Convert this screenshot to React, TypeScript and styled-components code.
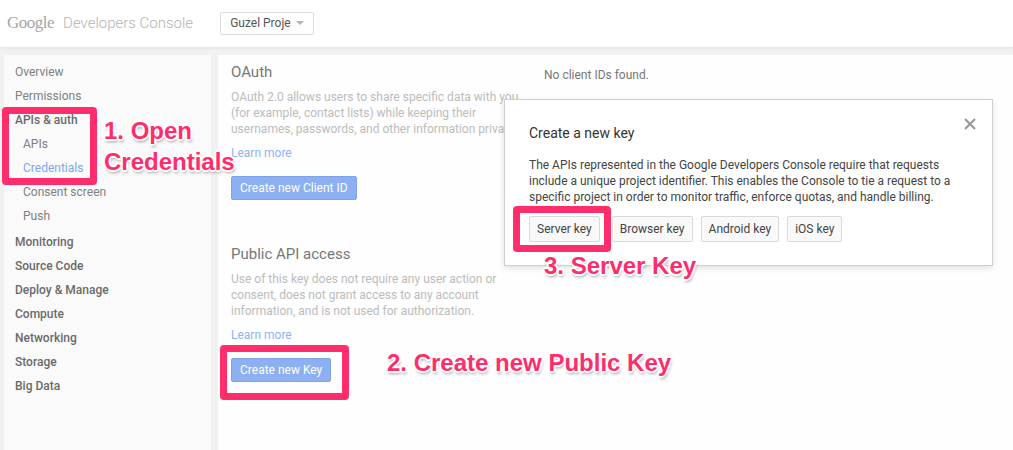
import React from "react";
import styled, { createGlobalStyle } from "styled-components";

const GlobalStyle = createGlobalStyle`
  html, body { margin: 0; padding: 0; }
  body {
    background: #f1f1f1;
    font-family: Roboto, "Noto Sans", Arial, sans-serif;
    -webkit-font-smoothing: antialiased;
  }
`;

const PINK = "#ff2d6c";

const Page = styled.div`
  position: relative;
  width: 1013px;
  height: 450px;
  overflow: hidden;
  background: #f1f1f1;
`;

const Header = styled.header`
  display: flex;
  align-items: center;
  height: 46px;
  padding: 0 0 1px 7px;
  background: #ffffff;
  box-shadow: 0 1px 3px rgba(0, 0, 0, 0.08);
  position: relative;
  z-index: 1;
`;

const GoogleLogo = styled.span`
  font-family: "Liberation Serif", "DejaVu Serif", serif;
  font-size: 17px;
  color: #a6a6a6;
  letter-spacing: -0.5px;
`;

const ProductName = styled.span`
  margin-left: 9px;
  font-size: 15px;
  font-weight: 300;
  color: #b3b3b3;
`;

const ProjectSelect = styled.div`
  margin-left: 27px;
  display: flex;
  align-items: center;
  justify-content: space-between;
  width: 94px;
  height: 23px;
  box-sizing: border-box;
  padding: 0 9px 0 9px;
  border: 1px solid #dcdcdc;
  border-radius: 2px;
  background: #fff;
  font-size: 12px;
  color: #555;
`;

const Caret = styled.span`
  width: 0;
  height: 0;
  border-left: 4px solid transparent;
  border-right: 4px solid transparent;
  border-top: 4px solid #b5b5b5;
`;

const Body = styled.div`
  display: flex;
  gap: 7px;
  padding: 8px 0 0 4px;
  height: 396px;
`;

const Sidebar = styled.nav`
  width: 207px;
  flex: none;
  background: #fafafa;
  padding-top: 5px;
  box-sizing: border-box;
`;

const NavItem = styled.div<{ $level: number; $strong?: boolean; $active?: boolean; $gapAfter?: boolean }>`
  height: 24px;
  line-height: 24px;
  font-size: 12px;
  padding-left: ${(p) => (p.$level === 1 ? 19 : 11)}px;
  font-weight: ${(p) => (p.$strong ? 500 : 400)};
  color: ${(p) => (p.$active ? "#7ba7f5" : p.$strong ? "#6a6a6a" : "#808080")};
  margin-bottom: ${(p) => (p.$gapAfter ? 2 : 0)}px;
  white-space: nowrap;
`;

const Main = styled.main`
  position: relative;
  flex: 1;
  background: #fefefe;
  display: grid;
  grid-template-columns: 300px 1fr;
  column-gap: 13px;
  align-content: start;
  padding: 7px 0 0 13px;
`;

const Section = styled.section<{ $spaced?: boolean }>`
  display: flex;
  flex-direction: column;
  align-items: flex-start;
  margin-top: ${(p) => (p.$spaced ? 44 : 0)}px;
`;

const SectionTitle = styled.h2`
  margin: 0;
  font-size: 15px;
  line-height: 20px;
  font-weight: 400;
  color: #777;
`;

const Description = styled.p`
  margin: 7px 0 0;
  font-size: 12px;
  line-height: 16px;
  color: #bcbcbc;
`;

const LearnMore = styled.a`
  margin-top: 8px;
  font-size: 12px;
  line-height: 16px;
  color: #8db3f6;
  text-decoration: none;
`;

const PrimaryButton = styled.button`
  margin-top: 15px;
  height: 24px;
  padding: 0 8px;
  border: 1px solid #7ea3ea;
  border-radius: 2px;
  background: #8cb0f2;
  color: #fff;
  font-family: Roboto, Arial, sans-serif;
  font-size: 12px;
`;

const Column = styled.div`
  display: flex;
  flex-direction: column;
`;

const EmptyNote = styled.div`
  margin-top: 5px;
  font-size: 12px;
  line-height: 16px;
  color: #777;
`;

const Dialog = styled.div`
  position: absolute;
  left: 286px;
  top: 44px;
  width: 489px;
  height: 167px;
  box-sizing: border-box;
  background: #fff;
  border: 1px solid #cfcfcf;
  box-shadow: 0 2px 6px rgba(0, 0, 0, 0.12);
  padding: 23px 24px 0 24px;
`;

const DialogTitle = styled.h3`
  margin: 0;
  font-size: 14px;
  line-height: 20px;
  font-weight: 400;
  color: #333;
`;

const DialogText = styled.p`
  margin: 14px 0 0;
  font-size: 12px;
  line-height: 16px;
  color: #444;
`;

const CloseButton = styled.div`
  position: absolute;
  top: 16px;
  right: 15px;
  width: 14px;
  height: 14px;
`;

const KeyRow = styled.div`
  display: flex;
  gap: 8px;
  margin-top: 11px;
`;

const KeyButton = styled.button<{ $extra?: boolean }>`
  height: 26px;
  padding: 0 7px;
  border: 1px solid #dadada;
  border-radius: 2px;
  background: #f9f9f9;
  color: #444;
  font-family: Roboto, Arial, sans-serif;
  font-size: 12px;
  margin-right: ${(p) => (p.$extra ? 4 : 0)}px;
`;

const Highlight = styled.div<{ $x: number; $y: number; $w: number; $h: number }>`
  position: absolute;
  left: ${(p) => p.$x}px;
  top: ${(p) => p.$y}px;
  width: ${(p) => p.$w}px;
  height: ${(p) => p.$h}px;
  box-sizing: border-box;
  border: 7px solid ${PINK};
  border-radius: 4px;
  pointer-events: none;
`;

const Annotation = styled.div<{ $x: number; $y: number }>`
  position: absolute;
  left: ${(p) => p.$x}px;
  top: ${(p) => p.$y}px;
  font-family: "Liberation Sans", Arial, sans-serif;
  font-weight: 700;
  font-size: 24px;
  line-height: 31px;
  color: ${PINK};
  white-space: nowrap;
  text-shadow: -1px -1px 0 #fff, 1px -1px 0 #fff, -1px 1px 0 #fff, 1px 1px 0 #fff,
    0 2px 0 #fff, 2px 0 0 #fff, -2px 0 0 #fff, 0 -2px 0 #fff, 1px 3px 3px rgba(0, 0, 0, 0.35);
`;

const nav = [
  { label: "Overview", level: 0 },
  { label: "Permissions", level: 0 },
  { label: "APIs & auth", level: 0, strong: true },
  { label: "APIs", level: 1 },
  { label: "Credentials", level: 1, active: true },
  { label: "Consent screen", level: 1 },
  { label: "Push", level: 1, gapAfter: true },
  { label: "Monitoring", level: 0, strong: true },
  { label: "Source Code", level: 0, strong: true },
  { label: "Deploy & Manage", level: 0, strong: true },
  { label: "Compute", level: 0, strong: true },
  { label: "Networking", level: 0, strong: true },
  { label: "Storage", level: 0, strong: true },
  { label: "Big Data", level: 0, strong: true },
];

export default function App() {
  return (
    <Page>
      <GlobalStyle />
      <Header>
        <GoogleLogo>Google</GoogleLogo>
        <ProductName>Developers Console</ProductName>
        <ProjectSelect>
          Guzel Proje
          <Caret />
        </ProjectSelect>
      </Header>
      <Body>
        <Sidebar>
          {nav.map((n) => (
            <NavItem
              key={n.label}
              $level={n.level}
              $strong={n.strong}
              $active={n.active}
              $gapAfter={n.gapAfter}
            >
              {n.label}
            </NavItem>
          ))}
        </Sidebar>
        <Main>
          <Column>
            <Section>
              <SectionTitle>OAuth</SectionTitle>
              <Description>
                OAuth 2.0 allows users to share specific data with you (for example, contact lists)
                while keeping their usernames, passwords, and other information private.
              </Description>
              <LearnMore href="#">Learn more</LearnMore>
              <PrimaryButton>Create new Client ID</PrimaryButton>
            </Section>
            <Section $spaced>
              <SectionTitle>Public API access</SectionTitle>
              <Description>
                Use of this key does not require any user action or consent, does not grant access
                to any account information, and is not used for authorization.
              </Description>
              <LearnMore href="#">Learn more</LearnMore>
              <PrimaryButton>Create new Key</PrimaryButton>
            </Section>
          </Column>
          <Column>
            <EmptyNote>No client IDs found.</EmptyNote>
          </Column>
          <Dialog>
            <CloseButton>
              <svg width="14" height="14" viewBox="0 0 14 14">
                <path d="M2 2 L12 12 M12 2 L2 12" stroke="#9a9a9a" strokeWidth="2.2" />
              </svg>
            </CloseButton>
            <DialogTitle>Create a new key</DialogTitle>
            <DialogText>
              The APIs represented in the Google Developers Console require that requests include a
              unique project identifier. This enables the Console to tie a request to a specific
              project in order to monitor traffic, enforce quotas, and handle billing.
            </DialogText>
            <KeyRow>
              <KeyButton $extra>Server key</KeyButton>
              <KeyButton>Browser key</KeyButton>
              <KeyButton>Android key</KeyButton>
              <KeyButton>iOS key</KeyButton>
            </KeyRow>
          </Dialog>
        </Main>
      </Body>

      <Highlight $x={2} $y={107} $w={95} $h={78} />
      <Highlight $x={220} $y={345} $w={129} $h={55} />
      <Highlight $x={513} $y={206} $w={98} $h={46} />

      <Annotation $x={104} $y={115}>
        1. Open
        <br />
        Credentials
      </Annotation>
      <Annotation $x={387} $y={347}>2. Create new Public Key</Annotation>
      <Annotation $x={544} $y={250}>3. Server Key</Annotation>
    </Page>
  );
}
